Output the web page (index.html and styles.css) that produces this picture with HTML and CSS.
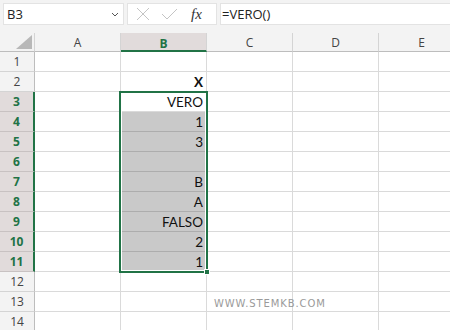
FILE: index.html
```html
<!DOCTYPE html>
<html>
<head>
    <title>VERO</title>
    <meta name="viewport" content="width=device-width, initial-scale=1">
    <link rel="stylesheet" href="styles.css">
</head>
<body>

    <div class="toolbar">
        <div class="namebox">
            <span>B3</span>
            <svg class="chevron" width="8" height="5" viewBox="0 0 8 5"><path d="M1 1 L4 4 L7 1" fill="none" stroke="#555" stroke-width="1"/></svg>
        </div>
        <div class="fxbox">
            <svg width="14" height="14" viewBox="0 0 14 14"><path d="M1 1 L13 13 M13 1 L1 13" stroke="#c4c4c4" stroke-width="1"/></svg>
            <svg width="17" height="12" viewBox="0 0 17 12"><path d="M1 6 L6 11 L16 1" fill="none" stroke="#c4c4c4" stroke-width="1"/></svg>
            <span class="fx">fx</span>
        </div>
        <div class="formula">=VERO()</div>
    </div>

    <div class="sheet">
        <div class="corner"><svg width="16" height="14" viewBox="0 0 16 14"><path d="M16 0 L16 14 L0 14 Z" fill="#b8b8b8"/></svg></div>
        <div class="colhead">A</div>
        <div class="colhead on">B</div>
        <div class="colhead">C</div>
        <div class="colhead">D</div>
        <div class="colhead">E</div>

        <div class="rowhead">1</div>
        <div class="cell"></div><div class="cell"></div><div class="cell"></div><div class="cell"></div><div class="cell"></div>

        <div class="rowhead">2</div>
        <div class="cell"></div><div class="cell num bold">X</div><div class="cell"></div><div class="cell"></div><div class="cell"></div>

        <div class="rowhead on">3</div>
        <div class="cell"></div><div class="cell num">VERO</div><div class="cell"></div><div class="cell"></div><div class="cell"></div>

        <div class="rowhead on">4</div>
        <div class="cell"></div><div class="cell num sel">1</div><div class="cell"></div><div class="cell"></div><div class="cell"></div>

        <div class="rowhead on">5</div>
        <div class="cell"></div><div class="cell num sel">3</div><div class="cell"></div><div class="cell"></div><div class="cell"></div>

        <div class="rowhead on">6</div>
        <div class="cell"></div><div class="cell num sel"></div><div class="cell"></div><div class="cell"></div><div class="cell"></div>

        <div class="rowhead on">7</div>
        <div class="cell"></div><div class="cell num sel">B</div><div class="cell"></div><div class="cell"></div><div class="cell"></div>

        <div class="rowhead on">8</div>
        <div class="cell"></div><div class="cell num sel">A</div><div class="cell"></div><div class="cell"></div><div class="cell"></div>

        <div class="rowhead on">9</div>
        <div class="cell"></div><div class="cell num sel">FALSO</div><div class="cell"></div><div class="cell"></div><div class="cell"></div>

        <div class="rowhead on">10</div>
        <div class="cell"></div><div class="cell num sel">2</div><div class="cell"></div><div class="cell"></div><div class="cell"></div>

        <div class="rowhead on">11</div>
        <div class="cell"></div><div class="cell num sel">1</div><div class="cell"></div><div class="cell"></div><div class="cell"></div>

        <div class="rowhead">12</div>
        <div class="cell"></div><div class="cell"></div><div class="cell"></div><div class="cell"></div><div class="cell"></div>

        <div class="rowhead">13</div>
        <div class="cell"></div><div class="cell"></div><div class="cell"><span class="mark">WWW.STEMKB.COM</span></div><div class="cell"></div><div class="cell"></div>

        <div class="rowhead">14</div>
        <div class="cell"></div><div class="cell"></div><div class="cell"></div><div class="cell"></div><div class="cell"></div>

        <div class="selection"><span class="handle"></span></div>
    </div>

</body>
</html>
```

FILE: styles.css
```css
* {
    box-sizing: border-box;
}

body {
    margin: 0;
    padding: 0;
    background-color: #fff;
    font-family: "Open Sans", Arial, sans-serif;
    overflow: hidden;
}

.toolbar {
    display: flex;
    gap: 3px;
    height: 33px;
    padding: 3px 0 8px 3px;
    background-color: #f3f3f3;
}

.namebox {
    display: flex;
    align-items: center;
    justify-content: space-between;
    width: 121px;
    padding: 0 4px 0 3px;
    background-color: #fff;
    border: 1px solid #e3e3e3;
    font-size: 13px;
    color: #222;
}

.fxbox {
    display: flex;
    align-items: center;
    gap: 11px;
    width: 90px;
    padding: 0 0 0 8px;
    background-color: #fff;
    border: 1px solid #e3e3e3;
}

.fx {
    font-family: "Liberation Serif", serif;
    font-style: italic;
    font-size: 15px;
    color: #333;
    margin-left: 2px;
}

.formula {
    flex: 1;
    display: flex;
    align-items: center;
    padding-left: 1px;
    background-color: #fff;
    border: 1px solid #e3e3e3;
    border-right: none;
    font-size: 13px;
    color: #222;
}

.sheet {
    position: relative;
    display: grid;
    grid-template-columns: 35px repeat(5, 86px);
    grid-template-rows: 19px;
    grid-auto-rows: 20px;
}

.corner,
.colhead,
.rowhead {
    background-color: #f3f3f3;
    border-right: 1px solid #d4d4d4;
    border-bottom: 1px solid #d4d4d4;
    color: #444;
    font-size: 12px;
    display: flex;
    align-items: center;
    justify-content: center;
}

.corner {
    align-items: flex-end;
    justify-content: flex-end;
    padding: 0 2px 2px 0;
    border-bottom-color: #bdbdbd;
}

.colhead {
    border-bottom-color: #bdbdbd;
    padding-top: 1px;
}

.rowhead {
    border-right-color: #bdbdbd;
}

.colhead.on {
    background-color: #e1dbdb;
    color: #217346;
    font-weight: bold;
    border-bottom: 2px solid #217346;
    padding-top: 3px;
}

.rowhead.on {
    background-color: #e1dbdb;
    color: #217346;
    font-weight: bold;
    border-right: 2px solid #217346;
    border-bottom-color: #c8c2c2;
}

.cell {
    border-right: 1px solid #dadada;
    border-bottom: 1px solid #dadada;
    font-family: Lato, "Liberation Sans", sans-serif;
    font-size: 13.5px;
    color: #111;
    white-space: nowrap;
    padding: 2px 3px 0 3px;
}

.num {
    text-align: right;
}

.bold {
    font-weight: bold;
}

.sel {
    background-color: #c9c9c9;
    border-bottom-color: #adadad;
}

.mark {
    display: inline-block;
    margin: 1px 0 0 4px;
    font-family: "DejaVu Sans", sans-serif;
    font-size: 10px;
    letter-spacing: 0.9px;
    color: #9a9a9a;
}

.selection {
    position: absolute;
    left: 119px;
    top: 58px;
    width: 89px;
    height: 182px;
    border: 2px solid #217346;
    box-shadow: inset 0 0 0 1px #fff;
}

.handle {
    position: absolute;
    right: -4px;
    bottom: -4px;
    width: 6px;
    height: 6px;
    background-color: #217346;
    border: 1px solid #fff;
}
```
